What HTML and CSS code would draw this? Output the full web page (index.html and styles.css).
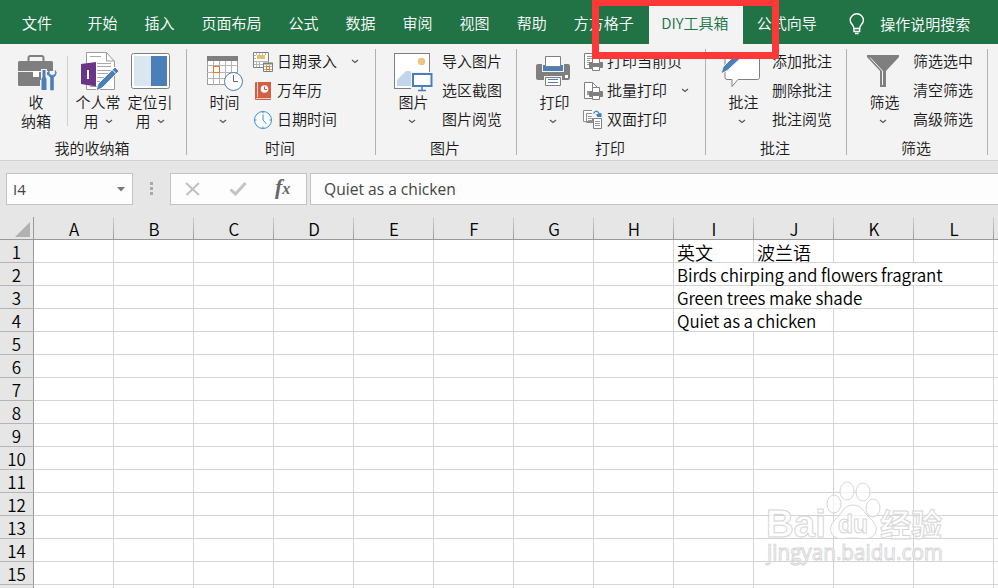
FILE: index.html
```html
<!DOCTYPE html>
<html lang="zh-CN">
  <head>
    <meta charset="UTF-8" />
    <meta name="viewport" content="width=device-width, initial-scale=1.0" />
    <title>Excel</title>
    <link rel="stylesheet" href="styles.css">
  </head>
  <body>
    <nav class="tabs">
      <a class="tab file">文件</a>
      <a class="tab">开始</a>
      <a class="tab">插入</a>
      <a class="tab">页面布局</a>
      <a class="tab">公式</a>
      <a class="tab">数据</a>
      <a class="tab">审阅</a>
      <a class="tab">视图</a>
      <a class="tab">帮助</a>
      <a class="tab">方方格子</a>
      <a class="tab active">DIY工具箱</a>
      <a class="tab">公式向导</a>
      <a class="tell-me">
        <svg width="16" height="22" viewBox="0 0 16 22" fill="none" stroke="#fff" stroke-width="1.4">
          <path d="M5 15.5C5 12 1.2 11 1.2 7.2a6.6 6.4 0 0 1 13.2 0C14.4 11 10.6 12 10.6 15.5z" />
          <path d="M5 15v3.5h5.6V15M6 20.5h3.6" />
        </svg>
        <span>操作说明搜索</span>
      </a>
    </nav>

    <div class="ribbon">
      <section class="group first">
        <div class="group-body">
          <button class="big">
            <svg width="42" height="42" viewBox="0 0 42 42">
              <path d="M13.5 11V8q0-2 2-2h11q2 0 2 2v3" fill="none" stroke="#7f7f7f" stroke-width="2" />
              <rect x="3" y="11" width="35" height="25" rx="1.5" fill="#7f7f7f" />
              <path d="M3 21.5h35" stroke="#f3f3f3" />
              <rect x="18" y="21" width="6" height="6" fill="#fff" />
              <path d="M26 19h6v6h1v-4h7v21H25V30h1z" fill="#f3f3f3" />
              <path d="M27.5 20h3v7l1 2v11h-5V29l1-2z" fill="#4a7fb8" />
              <path d="M34 20.500q-2 3 0 5.500l1.500 1.500V40h3V27.500L40 26q2.500-3 .3-5.500v3.500l-2 1.200h-2L34.400 24z" fill="#4a7fb8" stroke="#4a7fb8" stroke-width=".6" />
            </svg>
            <span>收<br>纳箱</span>
          </button>
          <i class="divider"></i>
          <button class="big">
            <svg width="42" height="42" viewBox="0 0 42 42">
              <path d="M9.500 2.500h20l8 9v28h-28z" fill="#fff" stroke="#9b9b9b" />
              <path d="M29.500 2.500v8.500h8" fill="none" stroke="#9b9b9b" />
              <path d="M13 6.500h11M20 13.500h14M20 16.500h14M20 20.500h14M20 23.500h11M20 27.500h8M20 31.500h6M13 36.500h7" stroke="#aaa" />
              <path d="M4 14l15-2v24.500L4 34z" fill="#6a3587" />
              <path d="M11 20v9" stroke="#fff" stroke-width="2" />
              <path d="M19 41l2-7 17-17 4 4-17 17z" fill="#4a7fb8" stroke="#f3f3f3" />
              <path d="M35 19.500l4 4" stroke="#f3f3f3" />
            </svg>
            <span>个人常<br>用<svg class="chev" width="8" height="5" viewBox="0 0 8 5"><path d="M1 1l3 2.500L7 1" /></svg></span>
          </button>
          <button class="big">
            <svg width="42" height="42" viewBox="0 0 42 42">
              <rect x="2.500" y="3.500" width="38" height="35" rx="2" fill="#fff" stroke="#7f7f7f" />
              <rect x="5" y="6" width="17" height="30" fill="#dce6f1" />
              <rect x="22" y="6" width="16" height="30" fill="#4a7fb8" />
            </svg>
            <span>定位引<br>用<svg class="chev" width="8" height="5" viewBox="0 0 8 5"><path d="M1 1l3 2.500L7 1" /></svg></span>
          </button>
        </div>
        <div class="group-name">我的收纳箱</div>
      </section>

      <section class="group wide">
        <div class="group-body">
          <button class="big">
            <svg width="42" height="42" viewBox="0 0 42 42">
              <rect x="5.500" y="6.500" width="30" height="28" fill="#fff" stroke="#9b9b9b" />
              <path d="M11.500 10v25M17.500 10v25M23.500 10v25M29.500 10v25M5 15.500h31M5 22.500h31M5 28.500h31" stroke="#b5b5b5" />
              <rect x="5" y="6" width="31" height="5" fill="#7f7f7f" />
              <rect x="11.500" y="16.500" width="6" height="6" fill="#fff" stroke="#e07b28" />
              <circle cx="31.500" cy="31.500" r="9" fill="#fff" stroke="#4a7fb8" />
              <path d="M31.500 25v6.500H36" fill="none" stroke="#666" />
            </svg>
            <span>时间<svg class="chev" width="8" height="5" viewBox="0 0 8 5"><path d="M1 1l3 2.500L7 1" /></svg></span>
          </button>
          <div class="small-list">
            <button class="small">
              <svg width="20" height="20" viewBox="0 0 20 20">
                <path d="M.5.500h15v15H.5z" fill="#fff" stroke="#7f7f7f" />
                <path d="M3.500 1v2M6.500 1v2M9.500 1v2M12.500 1v2M1 3.500h2M1 6.500h2M1 9.500h15M1 12.500h9M3.500 9v6M6.500 9v6" stroke="#b5b5b5" />
                <rect x="4" y="3" width="8" height="4" fill="#e8bf6c" />
                <path d="M10.500 11.500h9v8h-9z" fill="#fff" stroke="#7f7f7f" />
                <path d="M10 11.500h10" stroke="#7f7f7f" stroke-width="2" />
                <path d="M13.500 13v6M16.500 13v6M11 14.500h8M11 17.500h8" stroke="#b5b5b5" />
                <rect x="13.500" y="14.500" width="3" height="3" fill="#fff" stroke="#e07b28" />
              </svg>
              <span>日期录入</span>
              <svg class="chev" width="8" height="5" viewBox="0 0 8 5"><path d="M1 1l3 2.500L7 1" /></svg>
            </button>
            <button class="small">
              <svg width="20" height="20" viewBox="0 0 20 20">
                <path d="M2 2q0-1 1-1h15v18H3q-1 0-1-1z" fill="#d65f43" />
                <path d="M4.500 1v15M3 17.500h15" stroke="#f3d3ca" />
                <circle cx="11.500" cy="8" r="3.800" fill="#fff" />
                <path d="M11.500 5.500V8.500h2.500" fill="none" stroke="#d65f43" />
              </svg>
              <span>万年历</span>
            </button>
            <button class="small">
              <svg width="20" height="20" viewBox="0 0 20 20" fill="none" stroke="#3f8ed0">
                <circle cx="10" cy="10" r="8.500" fill="#fff" />
                <path d="M10 4.500V10l3.500 4M10 2v1.500M10 16.500V18M2 10h1.500M16.500 10H18" />
              </svg>
              <span>日期时间</span>
            </button>
          </div>
        </div>
        <div class="group-name">时间</div>
      </section>

      <section class="group">
        <div class="group-body">
          <button class="big">
            <svg width="42" height="42" viewBox="0 0 42 42">
              <rect x="3.500" y="3.500" width="35" height="35" fill="#fff" stroke="#7f7f7f" />
              <circle cx="30.500" cy="11.500" r="3.700" fill="#edc47c" />
              <path d="M6 36v-6l9-9h4l3 3v12z" fill="#c3d5ea" />
              <path d="M20 22h22v20H20z" fill="#f3f3f3" />
              <rect x="22" y="24" width="18.500" height="12" fill="#fff" stroke="#4a7fb8" stroke-width="2" />
              <path d="M31 37v3M27 40.500h8" stroke="#4a7fb8" stroke-width="1.500" />
            </svg>
            <span>图片<svg class="chev" width="8" height="5" viewBox="0 0 8 5"><path d="M1 1l3 2.500L7 1" /></svg></span>
          </button>
          <div class="small-list">
            <button class="small"><span>导入图片</span></button>
            <button class="small"><span>选区截图</span></button>
            <button class="small"><span>图片阅览</span></button>
          </div>
        </div>
        <div class="group-name">图片</div>
      </section>

      <section class="group wide">
        <div class="group-body">
          <button class="big">
            <svg width="42" height="42" viewBox="0 0 42 42">
              <rect x="4" y="14" width="34" height="16" rx="2" fill="#7f7f7f" />
              <path d="M10 13h22v9H10z" fill="#f3f3f3" />
              <path d="M11 15h20v6H11z" fill="#4a7fb8" />
              <path d="M13.500 6.500h15v10h-15z" fill="#fff" stroke="#7f7f7f" />
              <rect x="33" y="25" width="3" height="3" fill="#fff" />
              <path d="M12 26h18v10H12z" fill="#f3f3f3" />
              <path d="M13.500 27.500h15v8h-15z" fill="#fff" stroke="#7f7f7f" />
              <path d="M16 29.500h10M16 32.500h10" stroke="#4a7fb8" />
            </svg>
            <span>打印<svg class="chev" width="8" height="5" viewBox="0 0 8 5"><path d="M1 1l3 2.500L7 1" /></svg></span>
          </button>
          <div class="small-list">
            <button class="small">
              <svg width="20" height="20" viewBox="0 0 20 20">
                <path d="M1.500 1.500h13v15h-13z" fill="#fff" stroke="#7f7f7f" />
                <path d="M4 4.500h8M4 6.500h8M4 8.500h3M4 10.500h3M4 12.500h3" stroke="#9b9b9b" />
                <rect x="6" y="10" width="14" height="6" rx="1" fill="#7f7f7f" />
                <path d="M9.500 6.500h7v5h-7zM9.500 14.500h7v4h-7z" fill="#fff" stroke="#7f7f7f" />
              </svg>
              <span>打印当前页</span>
            </button>
            <button class="small">
              <svg width="20" height="20" viewBox="0 0 20 20">
                <path d="M1.500 1.500h8l5 5v11h-13z" fill="#fff" stroke="#7f7f7f" />
                <path d="M9.500 1.500v5h5" fill="none" stroke="#7f7f7f" />
                <path d="M4 10h3v4H4z" fill="#9b9b9b" />
                <rect x="6" y="10" width="14" height="6" rx="1" fill="#7f7f7f" />
                <path d="M9.500 6.500h7v5h-7zM9.500 14.500h7v4h-7z" fill="#fff" stroke="#7f7f7f" />
              </svg>
              <span>批量打印</span>
              <svg class="chev" width="8" height="5" viewBox="0 0 8 5"><path d="M1 1l3 2.500L7 1" /></svg>
            </button>
            <button class="small">
              <svg width="20" height="20" viewBox="0 0 20 20">
                <path d="M.5.500h9v11h-9zM3.500 3.500h8v9h-8z" fill="#fff" stroke="#8b8b8b" />
                <path d="M5 6.500h4M5 8.500h4M5 10.500h4" stroke="#9b9b9b" />
                <path d="M9 0h11v8H9z" fill="#f3f3f3" />
                <path d="M10.500 8.500h8v10h-8z" fill="#fff" stroke="#7f7f7f" />
                <path d="M12 11.500h5M12 13.500h5M12 15.500h5" stroke="#9b9b9b" />
                <path d="M10.500 3.500q3-5 6 .5" fill="none" stroke="#3f7fc0" stroke-width="1.300" />
                <path d="M13 4.500l5.500-1.500v4h-4z" fill="#3f7fc0" />
              </svg>
              <span>双面打印</span>
            </button>
          </div>
        </div>
        <div class="group-name">打印</div>
      </section>

      <section class="group">
        <div class="group-body">
          <button class="big">
            <svg width="42" height="42" viewBox="0 0 42 42">
              <path d="M5.500 6.500h31q2 0 2 2v19q0 2-2 2H17l-6 7v-7H6q-2 0-2-2v-19z" fill="#fff" stroke="#7f7f7f" />
              <path d="M0 24l2-7L18 1l5 4L7 20z" fill="#4a7fb8" stroke="#f3f3f3" />
            </svg>
            <span>批注<svg class="chev" width="8" height="5" viewBox="0 0 8 5"><path d="M1 1l3 2.500L7 1" /></svg></span>
          </button>
          <div class="small-list">
            <button class="small"><span>添加批注</span></button>
            <button class="small"><span>删除批注</span></button>
            <button class="small"><span>批注阅览</span></button>
          </div>
        </div>
        <div class="group-name">批注</div>
      </section>

      <section class="group">
        <div class="group-body">
          <button class="big">
            <svg width="42" height="42" viewBox="0 0 42 42">
              <path d="M5 5h32v2L24 21v16h-6V21L5 7z" fill="#7f7f7f" />
              <path d="M8 7.500l12.500 13.500v14" fill="none" stroke="#f3f3f3" />
            </svg>
            <span>筛选<svg class="chev" width="8" height="5" viewBox="0 0 8 5"><path d="M1 1l3 2.500L7 1" /></svg></span>
          </button>
          <div class="small-list">
            <button class="small"><span>筛选选中</span></button>
            <button class="small"><span>清空筛选</span></button>
            <button class="small"><span>高级筛选</span></button>
          </div>
        </div>
        <div class="group-name">筛选</div>
      </section>
    </div>

    <div class="formula-bar">
      <div class="name-box">
        <span>I4</span>
        <svg width="8" height="5" viewBox="0 0 8 5"><path d="M0 0h8L4 4.500z" fill="#777" /></svg>
      </div>
      <div class="dots"><i></i><i></i><i></i></div>
      <div class="fx-box">
        <svg width="16" height="14" viewBox="0 0 16 14"><path d="M1 1l13 12M14 1L1.500 13" stroke="#c0c0c0" stroke-width="2" fill="none" /></svg>
        <svg width="18" height="14" viewBox="0 0 18 14"><path d="M1.500 7.500l5 4.500L16.500 1" stroke="#c3c3c3" stroke-width="3" fill="none" /></svg>
        <span class="fx">f<small>x</small></span>
      </div>
      <div class="formula">Quiet as a chicken</div>
    </div>

    <table class="sheet" id="sheet"></table>

    <div class="highlight"></div>

    <svg class="watermark" width="184" height="92" viewBox="0 0 184 92">
      <g fill="#fff" fill-opacity=".7" stroke="#d6d6d6">
        <ellipse cx="71" cy="25" rx="7" ry="9" />
        <ellipse cx="84" cy="12" rx="7" ry="9" />
        <ellipse cx="100" cy="13" rx="7" ry="9" />
        <ellipse cx="110" cy="29" rx="7" ry="9" />
        <path d="M90 26C81 26 79 34 74 39C68 44 66 49 69 55C73 62 82 59 90 59C98 59 107 62 112 55C115 49 112 44 107 39C101 34 99 26 90 26z" />
        <text class="wm-logo" x="3" y="58" textLength="60" lengthAdjust="spacingAndGlyphs">Bai</text>
        <text class="wm-du" x="75" y="54" textLength="30" lengthAdjust="spacingAndGlyphs">du</text>
        <text class="wm-cn" x="117" y="57" textLength="62" lengthAdjust="spacingAndGlyphs">经验</text>
        <text class="wm-url" x="4" y="81" textLength="176" lengthAdjust="spacingAndGlyphs">jingyan.baidu.com</text>
      </g>
    </svg>

    <script>
      const columns = "ABCDEFGHIJKL".split("");
      // span = how many columns the text runs over
      const cells = {
        I1: { text: "英文", span: 1, type: "cn" },
        J1: { text: "波兰语", span: 1, type: "cn" },
        I2: { text: "Birds chirping and flowers fragrant", span: 4, type: "en" },
        I3: { text: "Green trees make shade", span: 3, type: "en" },
        I4: { text: "Quiet as a chicken", span: 2, type: "en" },
      };

      let html = "<tr><th class='corner'><i></i></th>";
      columns.forEach((c) => (html += `<th class="col">${c}</th>`));
      html += "<th class='rest'></th></tr>";

      for (let row = 1; row <= 15; row++) {
        html += `<tr><th class="row">${row}</th>`;
        for (let i = 0; i <= columns.length; i++) {
          const cell = cells[columns[i] + row];
          if (cell) {
            html += `<td class="${cell.type}" colspan="${cell.span}">${cell.text}</td>`;
            i += cell.span - 1;
          } else {
            html += "<td></td>";
          }
        }
        html += "</tr>";
      }
      html += "<tr><th class='row'></th>" + "<td></td>".repeat(13) + "</tr>";
      document.getElementById("sheet").innerHTML = html;
    </script>
  </body>
</html>
```

FILE: styles.css
```css
* {
  box-sizing: border-box;
}
body {
  margin: 0;
  width: 998px;
  height: 588px;
  overflow: hidden;
  position: relative;
  background-color: #e6e6e6;
  color: #1a1a1a;
  font-family: "Noto Sans CJK SC", sans-serif;
  font-size: 15px;
  font-weight: 350;
}
button {
  padding: 0;
  border: none;
  background: none;
  color: inherit;
  font: inherit;
}
.tabs {
  display: flex;
  height: 44px;
  background-color: #217346;
  color: #fff;
  line-height: 46px;
  white-space: nowrap;
}
.tab {
  padding: 0 13.5px;
}
.tab.file {
  padding: 0 22px 0 22px;
}
.tab.active {
  width: 94px;
  margin-left: 2px;
  padding: 0 12px;
  background-color: #f3f3f3;
  color: #217346;
}
.tell-me {
  display: flex;
  align-items: center;
  gap: 15px;
  margin-left: 19px;
  height: 48px;
}
.ribbon {
  display: flex;
  height: 117px;
  padding-top: 5px;
  background-color: #f3f3f3;
  border-bottom: 1px solid #d0d0d0;
}
.group {
  width: 141px;
  height: 106px;
  border-right: 1px solid #b1b1b1;
}
.group.first {
  width: 187px;
}
.group.wide {
  width: 189px;
}
.group-body {
  display: flex;
  height: 88px;
  padding-left: 10px;
}
.group-name {
  height: 22px;
  padding-right: 2px;
  line-height: 22px;
  text-align: center;
}
.big {
  display: flex;
  flex-direction: column;
  align-items: center;
  width: 52px;
  padding-top: 1px;
  line-height: 19px;
  white-space: nowrap;
}
.big > svg {
  flex: none;
}
.chev {
  fill: none;
  stroke: #555;
  stroke-width: 1.2;
}
.big .chev {
  margin-left: 6px;
  vertical-align: 3px;
}
.group:not(.first) .big span {
  padding-left: 3px;
}
.group:not(.first) .big .chev {
  display: block;
  margin: 8px 0 0 10px;
}
.divider {
  width: 1px;
  height: 70px;
  margin: 7px 4px 0 5px;
  background-color: #d0d0d0;
}
.small-list {
  display: flex;
  flex-direction: column;
  margin-left: 4px;
}
.small {
  display: flex;
  align-items: center;
  gap: 4px;
  height: 29px;
  margin-top: -2px;
  margin-bottom: 2px;
  white-space: nowrap;
}
.small span {
  padding-bottom: 2px;
}
.small .chev {
  margin-left: 10px;
}
.formula-bar {
  display: flex;
  height: 56px;
  padding: 12px 0 12px 6px;
}
.name-box,
.fx-box,
.formula {
  display: flex;
  align-items: center;
  height: 32px;
  border: 1px solid #c3c3c3;
  background-color: #fdfdfd;
  color: #444;
  font-family: "Open Sans", "Noto Sans", sans-serif;
  font-weight: normal;
}
.name-box {
  justify-content: space-between;
  width: 127px;
  padding: 0 7px 0 6px;
  font-size: 15px;
}
.dots {
  display: flex;
  flex-direction: column;
  gap: 2px;
  margin: 9px 17px 0;
}
.dots i {
  width: 3px;
  height: 3px;
  background-color: #a9a9a9;
}
.fx-box {
  gap: 28px;
  width: 137px;
  padding-left: 14px;
}
.fx {
  color: #666;
  font-family: "Liberation Serif", serif;
  font-size: 22px;
  font-style: italic;
  font-weight: bold;
  line-height: 26px;
  margin-bottom: 2px;
}
.fx small {
  font-size: 16px;
}
.formula {
  flex: 1;
  margin-left: 3px;
  padding: 0 0 1px 13px;
  border-right: none;
  font-size: 15.6px;
}
.sheet {
  width: 998px;
  table-layout: fixed;
  border-collapse: separate;
  border-spacing: 0;
  background-color: #fff;
  color: #000;
  line-height: 20px;
}
.sheet th,
.sheet td {
  height: 23px;
  padding: 2px 0 0;
  border-right: 1px solid #d4d4d4;
  border-bottom: 1px solid #d4d4d4;
  white-space: nowrap;
}
.sheet th {
  background-color: #e6e6e6;
  font-weight: 350;
  font-size: 17px;
}
.sheet .corner {
  width: 34px;
  border-color: #999;
}
.corner i {
  display: block;
  width: 0;
  height: 0;
  margin: 0 0 0 15px;
  border-left: 15px solid transparent;
  border-bottom: 15px solid #b1b1b1;
}
.sheet .col {
  width: 80px;
  border-right: none;
  border-bottom-color: #999;
  background: linear-gradient(#d0d0d0, #999) right / 1px 100% no-repeat #e6e6e6;
}
.sheet .rest {
  width: 4px;
  border-right: none;
  border-bottom-color: #999;
}
.sheet td:last-child {
  border-right: none;
}
.sheet .row {
  border-right-color: #999;
  border-bottom-color: #b5b5b5;
}
.sheet td.cn {
  padding: 1px 0 0 3px;
  font-size: 18px;
}
.sheet td.en {
  padding-left: 3px;
  font-size: 17px;
  letter-spacing: -0.13px;
}
.highlight {
  position: absolute;
  left: 592px;
  top: -1px;
  width: 187px;
  height: 60px;
  border: 7px solid #fd3836;
}
.watermark {
  position: absolute;
  left: 763px;
  top: 479px;
}
.wm-logo {
  font: bold 39px "Liberation Sans", sans-serif;
}
.wm-du {
  font: bold 25px "Liberation Sans", sans-serif;
}
.wm-cn {
  font: bold 31px "Noto Sans CJK SC", sans-serif;
}
.wm-url {
  font: 22px "Open Sans", sans-serif;
}
```
